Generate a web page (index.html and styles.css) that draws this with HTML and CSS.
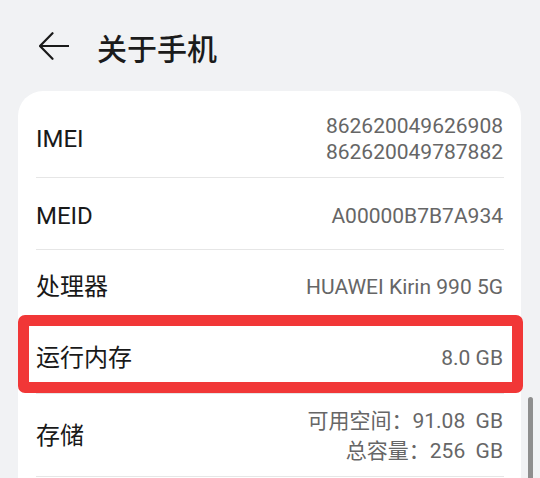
FILE: index.html
```html
<!DOCTYPE html>
<html lang="zh-CN">
<head>
<meta charset="utf-8">
<title>关于手机</title>
<link rel="stylesheet" href="styles.css">
</head>
<body>
<header class="topbar">
  <svg class="back" width="30" height="28" viewBox="0 0 30 28" aria-hidden="true">
    <path d="M13.5 1.2 L1 14 L13.5 26.8 M1 14 H29.5" fill="none" stroke="#1a1a1a" stroke-width="2.2" stroke-linecap="round" stroke-linejoin="round"/>
  </svg>
  <h1 class="title">关于手机</h1>
</header>
<main class="card">
  <div class="row row-imei">
    <span class="label">IMEI</span>
    <span class="value value-multi">862620049626908<br>862620049787882</span>
  </div>
  <div class="row row-meid">
    <span class="label">MEID</span>
    <span class="value">A00000B7B7A934</span>
  </div>
  <div class="row row-cpu">
    <span class="label">处理器</span>
    <span class="value">HUAWEI Kirin 990 5G</span>
  </div>
  <div class="row row-ram">
    <span class="label">运行内存</span>
    <span class="value">8.0 GB</span>
    <span class="highlight"></span>
  </div>
  <div class="row row-storage">
    <span class="label">存储</span>
    <span class="value value-storage">可用空间：91.08  GB<br>总容量：256  GB</span>
  </div>
  <div class="row row-more"></div>
</main>
<div class="scrollbar"></div>
</body>
</html>
```
FILE: styles.css
```css
html, body {
  margin: 0;
  padding: 0;
  height: 100%;
  overflow: hidden;
}
body {
  background: #f1f2f4;
  font-family: Roboto, "Noto Sans CJK SC", sans-serif;
  color: #1a1a1a;
  position: relative;
}
.topbar {
  height: 91px;
  display: flex;
  align-items: center;
  padding-left: 39px;
  box-sizing: border-box;
}
.back {
  display: block;
  flex: none;
}
.title {
  margin: 0 0 0 28px;
  font-family: "Noto Sans CJK SC", sans-serif;
  font-size: 30px;
  font-weight: 500;
  line-height: 1;
  color: #1b1b1b;
  position: relative;
  top: 1px;
}
.card {
  margin-left: 18px;
  width: 503px;
  min-height: 420px;
  background: #ffffff;
  border-radius: 25px 25px 0 0;
  display: flex;
  flex-direction: column;
}
.row {
  margin: 0 17px 0 18px;
  display: flex;
  justify-content: space-between;
  align-items: center;
  border-bottom: 1px solid #e6e6e6;
  box-sizing: border-box;
  position: relative;
}
.label {
  font-size: 24px;
  line-height: 30px;
  color: #191919;
}
.value {
  font-size: 21px;
  line-height: 26px;
  color: #666666;
  text-align: right;
  white-space: pre;
  margin-right: 1px;
}
.value-multi {
  line-height: 26px;
}
.value-storage {
  line-height: 30px;
}
.row-imei {
  height: 87px;
  padding-top: 9px;
}
.row-meid {
  height: 72px;
  padding-top: 5px;
}
.row-cpu {
  height: 72px;
  padding-top: 2px;
}
.row-ram {
  height: 72px;
  padding-top: 1px;
}
.row-storage {
  height: 83px;
  padding-top: 2px;
}
.row-more {
  height: 72px;
  border-bottom: none;
}
.highlight {
  position: absolute;
  top: -7px;
  bottom: 0;
  left: -18px;
  right: -19px;
  border: 11px solid #f13737;
  border-radius: 7px;
  pointer-events: none;
}
.scrollbar {
  position: absolute;
  left: 528px;
  top: 397px;
  width: 5px;
  height: 100px;
  border-radius: 3px;
  background: #8e8e8e;
}
```
